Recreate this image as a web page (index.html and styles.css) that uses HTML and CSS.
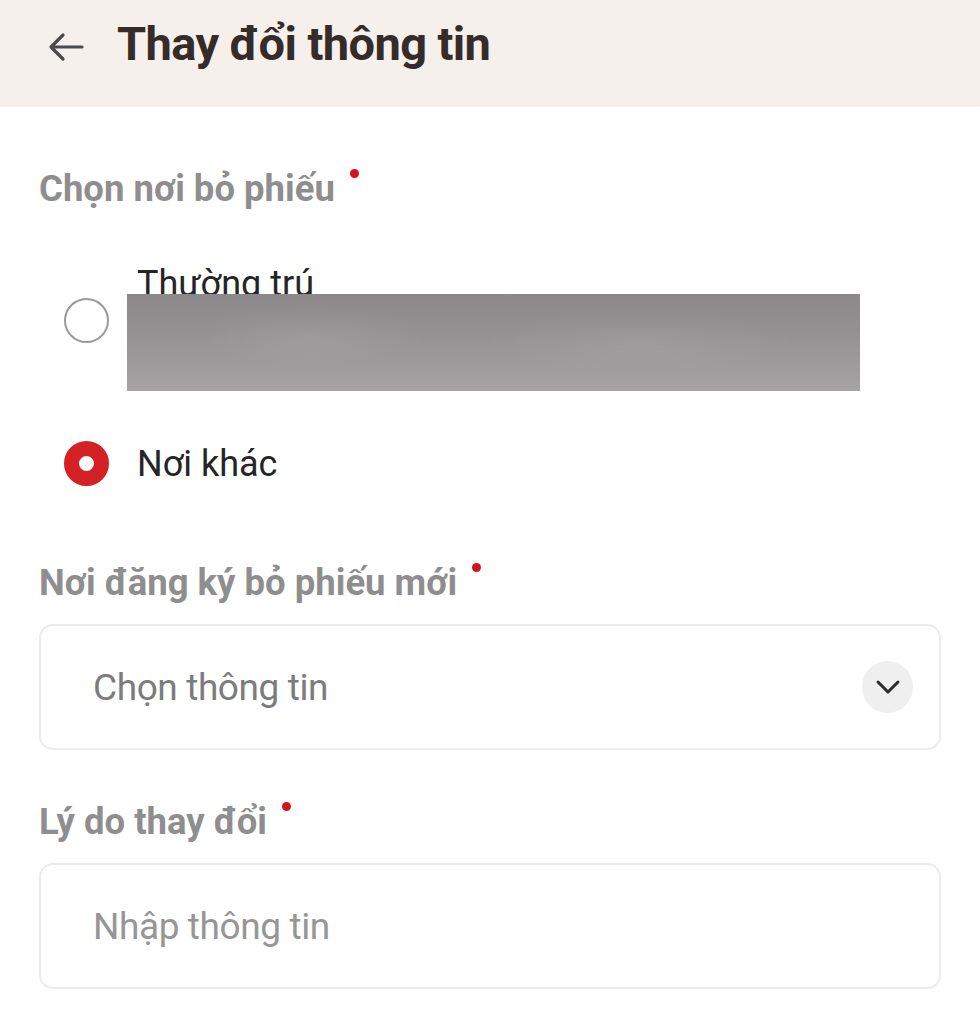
FILE: index.html
```html
<!DOCTYPE html>
<html lang="vi">
<head>
<meta charset="utf-8">
<link rel="stylesheet" href="styles.css">
</head>
<body>
<header class="topbar">
  <svg class="back" viewBox="0 0 36 30" width="36" height="30"><path d="M34 15H3M15 3L3 15l12 12" fill="none" stroke="#4a4a4a" stroke-width="3.2" stroke-linecap="round" stroke-linejoin="round"/></svg>
  <h1 class="title">Thay đổi thông tin</h1>
</header>
<main class="content">
  <div class="label first">Chọn nơi bỏ phiếu<span class="req"></span></div>
  <div class="options">
    <div class="option opt-one">
      <span class="radio"></span>
      <div class="opt-body">
        <div class="opt-text top">Thường trú</div>
        <div class="blur"></div>
      </div>
    </div>
    <div class="option opt-two">
      <span class="radio checked"></span>
      <div class="opt-text">Nơi khác</div>
    </div>
  </div>
  <div class="label second">Nơi đăng ký bỏ phiếu mới<span class="req"></span></div>
  <div class="field select">
    <span class="ph">Chọn thông tin</span>
    <span class="chev"><svg viewBox="0 0 26 16" width="26" height="16"><path d="M3 3l10 10 10-10" fill="none" stroke="#2b2b2b" stroke-width="3" stroke-linecap="round" stroke-linejoin="round"/></svg></span>
  </div>
  <div class="label third">Lý do thay đổi<span class="req"></span></div>
  <div class="field input">
    <span class="ph">Nhập thông tin</span>
  </div>
</main>
</body>
</html>
```
FILE: styles.css
```css
* { box-sizing: border-box; }
html, body { margin: 0; padding: 0; background: #ffffff; }
body { font-family: Roboto, "Noto Sans", sans-serif; width: 980px; height: 1015px; overflow: hidden; }

.topbar {
  height: 107px;
  background: #f5f0ec;
  display: flex;
  align-items: center;
  padding-left: 48px;
  padding-bottom: 20px;
}
.back { display: block; margin-right: 33px; margin-top: 6px; }
.title {
  margin: 0;
  font-size: 47px;
  font-weight: 700;
  color: #352c29;
  letter-spacing: -0.6px;
  line-height: 1;
}

.content { padding: 0 39px; }

.label {
  font-size: 36.5px;
  font-weight: 700;
  color: #8e8e8e;
  line-height: 40px;
  display: flex;
}
.label.first { margin-top: 62px; }
.req {
  width: 9px; height: 9px; border-radius: 50%;
  background: #d3141c;
  margin-left: 15px;
  margin-top: 0px;
}

.options { padding-left: 25px; }
.option { display: flex; align-items: center; }
.radio {
  flex: none;
  width: 45px; height: 45px; border-radius: 50%;
  border: 2.5px solid #9a9a9a;
  margin-right: 28px;
}
.opt-one .radio { margin-top: -14px; }
.radio.checked {
  border: 15px solid #d42125;
  background: #fff;
}
.opt-one { margin-top: 55px; }
.opt-body { display: flex; flex-direction: column; }
.opt-text {
  font-size: 36px;
  color: #252525;
  line-height: 40px;
}
.opt-text.top { height: 30px; overflow: visible; position: relative; z-index: 0; }
.blur {
  width: 733px; height: 97px;
  margin-left: -10px;
  background:
    radial-gradient(ellipse 120px 30px at 25% 45%, rgba(255,255,255,0.08), transparent),
    radial-gradient(ellipse 160px 30px at 70% 50%, rgba(255,255,255,0.07), transparent),
    linear-gradient(180deg, #8b8989 0%, #939191 40%, #a5a3a3 100%);
  position: relative; z-index: 1;
}
.opt-two { margin-top: 50px; }
.label.second { margin-top: 77px; }
.label.third { margin-top: 52px; }

.field {
  margin-top: 21px;
  height: 126px;
  border: 2px solid #ececec;
  border-radius: 14px;
  display: flex;
  align-items: center;
  padding-left: 52px;
  padding-right: 26px;
}
.ph {
  font-size: 37px;
  color: #7c7c7c;
  letter-spacing: -0.4px;
  flex: 1;
}
.input .ph { color: #969696; }
.chev {
  width: 51px; height: 52px; border-radius: 50%;
  background: #efefef;
  display: flex; align-items: center; justify-content: center;
}
.input { margin-top: 21px; }
```
